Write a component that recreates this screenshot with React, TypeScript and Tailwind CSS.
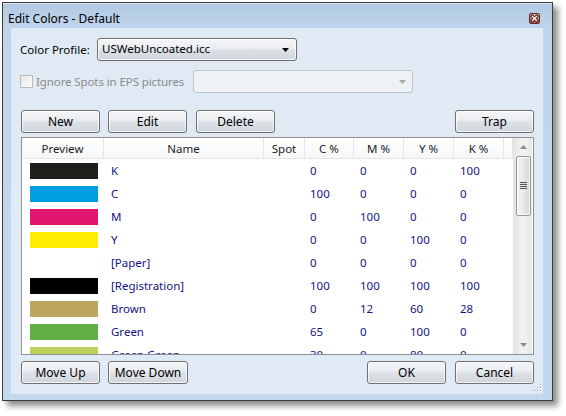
import React from 'react'

// Edit Colors dialog, Windows 7 basic look

type Row = { name: string; color: string | null; c: number; m: number; y: number; k: number }

const rows: Row[] = [
  { name: 'K', color: '#1f201c', c: 0, m: 0, y: 0, k: 100 },
  { name: 'C', color: '#009fe3', c: 100, m: 0, y: 0, k: 0 },
  { name: 'M', color: '#e2156f', c: 0, m: 100, y: 0, k: 0 },
  { name: 'Y', color: '#ffed00', c: 0, m: 0, y: 100, k: 0 },
  { name: '[Paper]', color: null, c: 0, m: 0, y: 0, k: 0 },
  { name: '[Registration]', color: '#000000', c: 100, m: 100, y: 100, k: 100 },
  { name: 'Brown', color: '#bca55d', c: 0, m: 12, y: 60, k: 28 },
  { name: 'Green', color: '#63ae44', c: 65, m: 0, y: 100, k: 0 },
  { name: 'Green Green', color: '#bdd15b', c: 30, m: 0, y: 80, k: 0 },
]

const cols = 'grid grid-cols-[82px_160px_41px_49px_50px_50px_50px_9px]'

function Btn({ label, className }: { label: string; className?: string }) {
  return (
    <button
      className={
        'h-[23px] w-[79px] rounded-[3px] border border-[#707070] bg-[linear-gradient(180deg,#f5f6f8_0%,#e9ecef_46%,#dce1e6_52%,#cfd6dc_100%)] text-[12px] leading-none text-black shadow-[inset_0_0_0_1px_rgba(255,255,255,0.75)] ' +
        (className ?? '')
      }
    >
      {label}
    </button>
  )
}

function CloseIcon() {
  return (
    <svg width="11" height="11" viewBox="0 0 11 11">
      <defs>
        <linearGradient id="cl" x1="0" y1="0" x2="0" y2="1">
          <stop offset="0" stopColor="#e7a89e" />
          <stop offset="0.5" stopColor="#d27266" />
          <stop offset="1" stopColor="#c0473b" />
        </linearGradient>
      </defs>
      <rect x="0.5" y="0.5" width="10" height="10" rx="1.5" fill="url(#cl)" stroke="#5a2d2a" />
      <path d="M3.3 3.3 L7.7 7.7 M7.7 3.3 L3.3 7.7" stroke="#3b1d1b" strokeWidth="3" strokeLinecap="square" />
      <path d="M3.5 3.5 L7.5 7.5 M7.5 3.5 L3.5 7.5" stroke="#ffffff" strokeWidth="1.4" strokeLinecap="square" />
    </svg>
  )
}

function Grip() {
  const dots = [
    [8, 0],
    [8, 3],
    [5, 3],
    [8, 6],
    [5, 6],
    [2, 6],
  ]
  return (
    <svg width="10" height="9" viewBox="0 0 10 9" className="absolute right-[1px] bottom-[1px]">
      {dots.map(([x, y], i) => (
        <g key={i}>
          <rect x={x + 1} y={y + 1} width="1" height="1" fill="#ffffff" />
          <rect x={x} y={y} width="1" height="1" fill="#8da2b8" />
        </g>
      ))}
    </svg>
  )
}

export default function App() {
  return (
    <div className="w-[566px] h-[416px] bg-white pl-[2px] pt-[2px] font-['Noto_Sans',sans-serif] text-[11.5px]">
      <div className="w-[551px] h-[399px] border border-[#3c3c3c] bg-[linear-gradient(180deg,#b1c9e3_0px,#c0d5ec_26px,#c3d8ee_100%)] shadow-[5px_5px_6px_rgba(0,0,0,0.45)] flex flex-col">
        {/* title bar */}
        <div className="h-[25px] shrink-0 flex items-start justify-between pl-[5px] pr-[12px] pt-[6px] shadow-[inset_0_1px_0_rgba(255,255,255,0.5)]">
          <span className="text-[12px] leading-[20px] text-black">Edit Colors - Default</span>
          <div className="mt-[4px]">
            <CloseIcon />
          </div>
        </div>

        {/* client area */}
        <div className="relative ml-[8px] mr-[9px] h-[366px] shrink-0 bg-[#dfeaf5] pl-[10px] pr-[9px] pt-[10px] flex flex-col">
          <div className="flex items-center h-[23px] shrink-0">
            <span className="w-[77px] -ml-[1px] text-black">Color Profile:</span>
            <div className="w-[200px] h-[23px] rounded-[3px] border border-[#707070] bg-[linear-gradient(180deg,#f5f6f8_0%,#e9ecef_46%,#dce1e6_52%,#cfd6dc_100%)] shadow-[inset_0_0_0_1px_rgba(255,255,255,0.75)] flex items-center justify-between pl-[4px] pr-[7px]">
              <span className="text-black -mt-[2px]">USWebUncoated.icc</span>
              <svg width="7" height="4" viewBox="0 0 7 4">
                <path d="M0 0 H7 L3.5 4 Z" fill="#000000" />
              </svg>
            </div>
          </div>

          <div className="flex items-center h-[23px] mt-[9px] shrink-0">
            <div className="w-[13px] h-[13px] -ml-[1px] border border-[#bcbcbc] bg-[linear-gradient(135deg,#e6e6e6,#fbfbfb)]" />
            <span className="ml-[3px] w-[157px] text-[#8a8a8a] tracking-[-0.1px]">Ignore Spots in EPS pictures</span>
            <div className="w-[220px] h-[23px] rounded-[3px] border border-[#bcc4cc] bg-[#eef2f6] flex items-center justify-end pr-[6px]">
              <svg width="7" height="4" viewBox="0 0 7 4">
                <path d="M0 0 H7 L3.5 4 Z" fill="#a8a8a8" />
              </svg>
            </div>
          </div>

          <div className="flex mt-[17px] shrink-0">
            <Btn label="New" />
            <Btn label="Edit" className="ml-[8px]" />
            <Btn label="Delete" className="ml-[9px]" />
            <Btn label="Trap" className="ml-auto" />
          </div>

          {/* color list */}
          <div className="mt-[4px] h-[218px] shrink-0 border border-[#8d9094] bg-white flex overflow-hidden">
            <div className="w-[491px] flex flex-col overflow-hidden">
              <div className={cols + ' h-[21px] shrink-0 border-b border-[#e3e4e6] bg-[linear-gradient(180deg,#ffffff,#f6f7f9)] text-[#1b1b1b]'}>
                {['Preview', 'Name', 'Spot', 'C %', 'M %', 'Y %', 'K %', ''].map((h, i) => (
                  <div key={i} className="flex items-center justify-center border-r border-[#e5e5e5] leading-none pt-[1px]">
                    {h}
                  </div>
                ))}
              </div>
              {rows.map((r) => (
                <div key={r.name} className={cols + ' h-[23px] shrink-0 items-center text-[#141482]'}>
                  <div className="pl-[8px]">
                    <div className="w-[68px] h-[16px]" style={{ background: r.color ?? 'transparent' }} />
                  </div>
                  <div className="pl-[7px]">{r.name}</div>
                  <div />
                  <div className="pl-[5px]">{r.c}</div>
                  <div className="pl-[6px]">{r.m}</div>
                  <div className="pl-[6px]">{r.y}</div>
                  <div className="pl-[6px]">{r.k}</div>
                  <div />
                </div>
              ))}
            </div>

            {/* scrollbar */}
            <div className="w-[19px] pl-[2px] bg-[linear-gradient(90deg,#e4e4e4,#f2f2f2_50%,#e8e8e8)] flex flex-col">
              <div className="h-[18px] shrink-0 flex items-center justify-center">
                <svg width="7" height="4" viewBox="0 0 7 4">
                  <path d="M3.5 0 L7 4 H0 Z" fill="#8c8c8c" />
                </svg>
              </div>
              <div className="h-[60px] shrink-0 mx-[1px] rounded-[2px] border border-[#979797] bg-[linear-gradient(90deg,#f4f4f4,#e8e8e8_50%,#d6d6d6)] shadow-[inset_0_0_0_1px_rgba(255,255,255,0.8)] flex items-center justify-center">
                <svg width="7" height="8" viewBox="0 0 7 8">
                  {[0, 2, 4, 6].map((y) => (
                    <rect key={y} x="0" y={y} width="7" height="1" fill="#555555" />
                  ))}
                </svg>
              </div>
              <div className="flex-1" />
              <div className="h-[18px] shrink-0 flex items-center justify-center">
                <svg width="7" height="4" viewBox="0 0 7 4">
                  <path d="M0 0 H7 L3.5 4 Z" fill="#8c8c8c" />
                </svg>
              </div>
            </div>
          </div>

          <div className="flex mt-[6px] shrink-0">
            <Btn label="Move Up" />
            <Btn label="Move Down" className="ml-[8px] w-[80px]" />
            <Btn label="OK" className="ml-auto" />
            <Btn label="Cancel" className="ml-[9px]" />
          </div>

          <Grip />
        </div>
      </div>
    </div>
  )
}
